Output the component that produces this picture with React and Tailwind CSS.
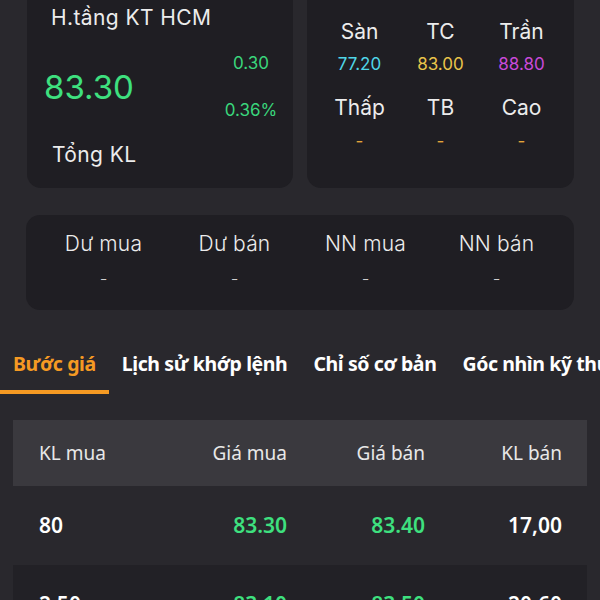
import React from 'react';

const sf = { fontFamily: 'Inter, "Noto Sans", sans-serif' };
const ss = { fontFamily: '"Noto Sans", "Open Sans", sans-serif' };

const tabs = ['Bước giá', 'Lịch sử khớp lệnh', 'Chỉ số cơ bản', 'Góc nhìn kỹ thuật'];

const rows = [
  { klMua: '80', giaMua: '83.30', giaBan: '83.40', klBan: '17,00' },
  { klMua: '2,50', giaMua: '83.10', giaBan: '83.50', klBan: '20,60' },
];

function App() {
  return (
    <div className="w-[600px] h-[600px] overflow-hidden bg-[#29282d] text-[#ececec]">
      <div className="flex gap-[14px] pl-[27px] -mt-[20px]" style={sf}>
        <div className="w-[266px] h-[208px] rounded-[14px] bg-[#1f1e23] flex flex-col">
          <div className="mt-[26px] ml-[24px] text-[21px] leading-[24px] tracking-[0.4px]">H.tầng KT HCM</div>
          <div className="h-[113px] flex items-center">
            <div className="ml-[17px] text-[33px] leading-[40px] text-[#3ee07f]">83.30</div>
            <div className="ml-auto mr-[12px] w-[60px] flex flex-col items-center gap-[23px] text-[17px] leading-[24px] text-[#3ad67c]">
              <span>0.30</span>
              <span>0.36%</span>
            </div>
          </div>
          <div className="ml-[25px] text-[21px] leading-[24px] tracking-[0.4px]">Tổng KL</div>
        </div>
        <div className="w-[267px] h-[208px] rounded-[14px] bg-[#1f1e23] px-[12px] pt-[40px] grid grid-cols-3 content-start text-center">
          <div className="text-[21px] leading-[24px]">Sàn</div>
          <div className="text-[21px] leading-[24px]">TC</div>
          <div className="text-[21px] leading-[24px]">Trần</div>
          <div className="mt-[9px] text-[17px] leading-[22px] text-[#4fd6e8]">77.20</div>
          <div className="mt-[9px] text-[17px] leading-[22px] text-[#e9c44a]">83.00</div>
          <div className="mt-[9px] text-[17px] leading-[22px] text-[#c94ad9]">88.80</div>
          <div className="mt-[21px] text-[21px] leading-[24px]">Thấp</div>
          <div className="mt-[21px] text-[21px] leading-[24px]">TB</div>
          <div className="mt-[21px] text-[21px] leading-[24px]">Cao</div>
          <div className="mt-[10px] text-[17px] leading-[22px] text-[#e3a43a]">-</div>
          <div className="mt-[10px] text-[17px] leading-[22px] text-[#e3a43a]">-</div>
          <div className="mt-[10px] text-[17px] leading-[22px] text-[#e3a43a]">-</div>
        </div>
      </div>

      <div className="mt-[27px] ml-[26px] w-[548px] h-[95px] rounded-[14px] bg-[#1f1e23] px-[12px] pt-[17px] grid grid-cols-4 content-start text-center font-light" style={sf}>
        {['Dư mua', 'Dư bán', 'NN mua', 'NN bán'].map((l) => (
          <div key={l} className="text-[21px] leading-[24px] tracking-[0.2px]">{l}</div>
        ))}
        {[0, 1, 2, 3].map((i) => (
          <div key={i} className="mt-[11px] text-[17px] leading-[24px] text-[#cfcfcf]">-</div>
        ))}
      </div>

      <div className="mt-[36px] flex whitespace-nowrap" style={ss}>
        {tabs.map((t, i) => (
          <div
            key={t}
            className={`shrink-0 px-[13px] pt-[4px] h-[48px] text-[19.5px] leading-[28px] font-bold tracking-[-0.4px] border-b-4 ${i === 0 ? 'text-[#f59a23] border-[#f59a23]' : 'text-white border-transparent'}`}
          >
            {t}
          </div>
        ))}
      </div>

      <div className="mt-[26px] mx-[13px]" style={ss}>
        <div className="h-[66px] bg-[#3a393e] grid grid-cols-[111px_137px_138px_137px] items-center pl-[26px] text-[19px] text-[#e8e8e8]">
          <div>KL mua</div>
          <div className="text-right">Giá mua</div>
          <div className="text-right">Giá bán</div>
          <div className="text-right">KL bán</div>
        </div>
        {rows.map((r, i) => (
          <div
            key={i}
            className={`h-[79px] grid grid-cols-[111px_137px_138px_137px] items-center pl-[26px] text-[21px] font-semibold ${i % 2 === 1 ? 'bg-[#222126]' : ''}`}
          >
            <div className="text-white">{r.klMua}</div>
            <div className="text-right text-[#3ee07f]">{r.giaMua}</div>
            <div className="text-right text-[#3ee07f]">{r.giaBan}</div>
            <div className="text-right text-white">{r.klBan}</div>
          </div>
        ))}
      </div>
    </div>
  );
}

export default App;
